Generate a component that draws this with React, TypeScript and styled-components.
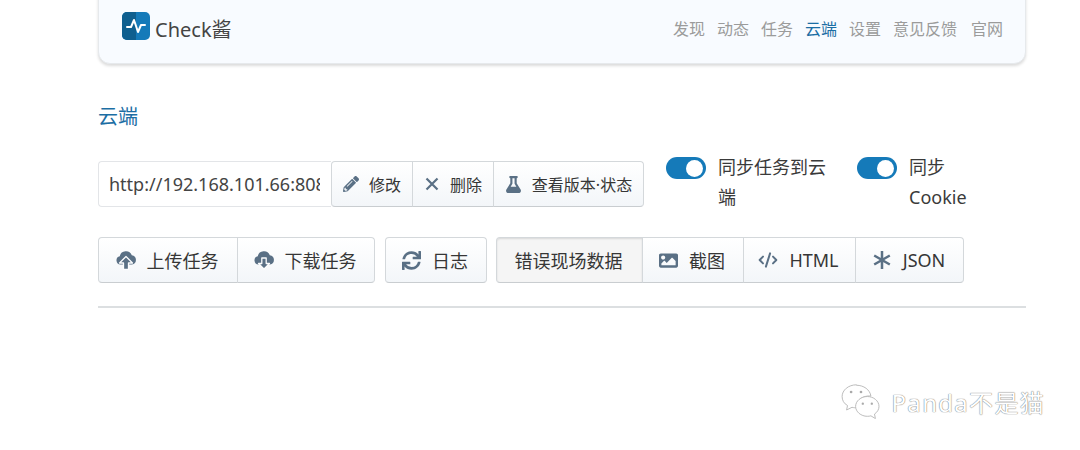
import * as React from 'react';
import styled, { createGlobalStyle } from 'styled-components';
import { FaPencilAlt, FaFlask, FaSync, FaImage } from 'react-icons/fa';
import { CodeXml } from 'lucide-react';

const GlobalStyle = createGlobalStyle`
  html, body {
    margin: 0;
    background: #fff;
    overflow: hidden;
  }
  body {
    font-family: "Noto Sans", "Noto Sans CJK SC", sans-serif;
    color: #363636;
  }
`;

const Page = styled.div`
  position: relative;
  width: 1080px;
  height: 450px;
  box-sizing: border-box;
  padding: 0 54px 0 98px;
  overflow: hidden;
`;

const Header = styled.header`
  display: flex;
  align-items: center;
  justify-content: space-between;
  box-sizing: border-box;
  height: 85px;
  margin-top: -21px;
  padding: 13px 24px 0 23px;
  background: #f8fbff;
  border: 1px solid #e6e9ec;
  border-radius: 12px;
  box-shadow: 0 2px 3px rgba(0, 0, 0, 0.14);
`;

const Brand = styled.div`
  display: flex;
  align-items: center;
  gap: 5px;
  font-size: 20px;
  color: #444;
  svg {
    margin-top: -5px;
  }
`;

const Nav = styled.nav`
  display: flex;
  gap: 12px;
`;

const NavItem = styled.span<{ $active?: boolean }>`
  font-size: 16px;
  color: ${(p) => (p.$active ? '#1c6ea4' : '#9b9b9b')};
  &:last-child {
    margin: 0 -2px 0 2px;
  }
`;

const Title = styled.h2`
  margin: 38px 0 0;
  height: 30px;
  font-size: 20px;
  line-height: 30px;
  font-weight: 400;
  color: #1c6ea4;
`;

const TopRow = styled.div`
  display: flex;
  align-items: flex-start;
  margin-top: 29px;
  height: 76px;
`;

const Group = styled.div<{ $shift?: boolean }>`
  display: flex;
  margin-left: ${(p) => (p.$shift ? -1 : 0)}px;
`;

const UrlInput = styled.input`
  box-sizing: border-box;
  width: 233px;
  height: 46px;
  padding: 0 11px 0 10px;
  border: 1px solid #e3e5e8;
  border-right: 0;
  border-radius: 4px 0 0 4px;
  outline: none;
  background: #fff;
  font: 18px "Noto Sans", sans-serif;
  color: #444;
`;

const Btn = styled.button<{ $small?: boolean; $on?: boolean; $w: number }>`
  display: flex;
  align-items: center;
  justify-content: center;
  gap: ${(p) => (p.$small ? 10 : 11)}px;
  box-sizing: border-box;
  width: ${(p) => p.$w}px;
  height: 46px;
  padding: 0 ${(p) => (p.$small ? 0 : 2)}px 0 0;
  border: 1px solid #d4d8db;
  border-bottom-color: #c9cdd0;
  margin-left: -1px;
  background: ${(p) => (p.$on ? '#f5f5f5' : 'linear-gradient(#fff, #f3f6f9)')};
  box-shadow: ${(p) => (p.$on ? 'inset 0 1px 2px rgba(0,0,0,.12)' : 'none')};
  font-family: "Noto Sans", "Noto Sans CJK SC", sans-serif;
  font-size: ${(p) => (p.$small ? 16 : 18)}px;
  color: #363636;
  &:first-child {
    margin-left: 0;
    border-radius: 4px 0 0 4px;
  }
  &:last-child {
    border-radius: 0 4px 4px 0;
  }
  &:only-child {
    border-radius: 4px;
  }
  svg {
    color: #5a7085;
    flex: none;
  }
`;

const Toggles = styled.div`
  display: flex;
  margin-left: 22px;
  margin-top: -4px;
`;

const ToggleItem = styled.div<{ $w: number; $labelW: number }>`
  display: flex;
  align-items: flex-start;
  gap: 12px;
  width: ${(p) => p.$w}px;
  font-size: 18px;
  line-height: 30px;
  color: #3a3a3a;
  span {
    display: block;
    width: ${(p) => p.$labelW}px;
    margin-top: -5px;
  }
`;

const Switch = styled.i`
  display: flex;
  flex: none;
  justify-content: flex-end;
  align-items: center;
  box-sizing: border-box;
  width: 40px;
  height: 22px;
  padding-right: 3px;
  border-radius: 11px;
  background: #157ab9;
  &::after {
    content: '';
    width: 17px;
    height: 17px;
    border-radius: 50%;
    background: #fff;
  }
`;

const BottomRow = styled.div`
  display: flex;
  gap: 10px;
`;

const Divider = styled.hr`
  height: 2px;
  margin: 23px 0 0;
  border: 0;
  background: #dcdfe1;
`;

const Watermark = styled.div`
  position: absolute;
  right: 35px;
  top: 383px;
  display: flex;
  align-items: center;
  gap: 11px;
  font-size: 24px;
  letter-spacing: 1.3px;
  color: #fff;
  text-shadow: 0 0 1px #707070, 0 0 1px #8a8a8a;
`;

const Logo = () => (
  <svg width="28" height="28" viewBox="0 0 28 28">
    <rect width="28" height="28" rx="5" fill="#157ab9" />
    <path d="M5 0h9v28H5a5 5 0 0 1-5-5V5a5 5 0 0 1 5-5z" fill="#0f5f8f" />
    <path d="M5 15h4l3-7 4 12 3-7h4" fill="none" stroke="#fff" strokeWidth="2" strokeLinejoin="round" strokeLinecap="round" />
  </svg>
);

const Cross = () => (
  <svg width="16" height="16" viewBox="0 0 16 16">
    <path d="M2.500 2.500l11 11M13.500 2.500l-11 11" stroke="currentColor" strokeWidth="2.200" strokeLinecap="butt" />
  </svg>
);

const Star = () => (
  <svg width="20" height="20" viewBox="0 0 20 20">
    <path d="M10 1v18M2.200 5.500l15.600 9M17.800 5.500l-15.600 9" stroke="currentColor" strokeWidth="2.500" />
  </svg>
);

const cloud = 'M4.500 14.500a4.200 4.200 0 0 1-.7-8.300 6.300 6.300 0 0 1 12-1 4.700 4.700 0 0 1 .2 9.300z';

const CloudUp = () => (
  <svg width="20" height="20" viewBox="0 0 20 20">
    <path d={cloud} fill="currentColor" />
    <path d="M10 6.500l-6.500 6.500h4v6.500h5V13h4z" fill="currentColor" stroke="#fbfcfd" strokeWidth="1.300" strokeLinejoin="round" />
  </svg>
);

const CloudDown = () => (
  <svg width="20" height="20" viewBox="0 0 20 20">
    <path d={cloud} fill="currentColor" />
    <path d="M10 19l-5.500-5.500h3.300V8h4.400v5.500h3.300z" fill="currentColor" stroke="#fbfcfd" strokeWidth="1.300" strokeLinejoin="round" />
  </svg>
);

const WeChat = () => (
  <svg width="40" height="36" viewBox="0 0 44 40" fill="#fff" stroke="#b5b5b5" strokeWidth="1">
    <path d="M17 2C8 2 1 8 1 15c0 4 2 8 6 10l-1 5 6-3c2 .5 4 .6 5 .5-1-8 7-14 16-13-1-7-8-12-16-12z" />
    <path d="M29 15c-7 0-13 5-13 11s6 11 13 11c1.500 0 3-.2 4-.5l5 3-1-5c3-2 5-5 5-8.500 0-6-6-11-13-11z" />
    <circle cx="11" cy="10" r="1.500" fill="#aaa" stroke="none" />
    <circle cx="22" cy="10" r="1.500" fill="#aaa" stroke="none" />
    <circle cx="24" cy="23" r="1.300" fill="#aaa" stroke="none" />
    <circle cx="34" cy="23" r="1.300" fill="#aaa" stroke="none" />
  </svg>
);

const navItems = ['发现', '动态', '任务', '云端', '设置', '意见反馈', '官网'];

export default function App() {
  return (
    <Page>
      <GlobalStyle />
      <Header>
        <Brand>
          <Logo />
          Check酱
        </Brand>
        <Nav>
          {navItems.map((item) => (
            <NavItem key={item} $active={item === '云端'}>{item}</NavItem>
          ))}
        </Nav>
      </Header>

      <Title>云端</Title>

      <TopRow>
        <UrlInput readOnly value="http://192.168.101.66:8080" />
        <Group>
          <Btn $small $w={82}><FaPencilAlt size={16} />修改</Btn>
          <Btn $small $w={82}><Cross />删除</Btn>
          <Btn $small $w={151}><FaFlask size={17} />查看版本·状态</Btn>
        </Group>
        <Toggles>
          <ToggleItem $w={191} $labelW={118}>
            <Switch />
            <span>同步任务到云端</span>
          </ToggleItem>
          <ToggleItem $w={110} $labelW={58}>
            <Switch />
            <span>同步 Cookie</span>
          </ToggleItem>
        </Toggles>
      </TopRow>

      <BottomRow>
        <Group>
          <Btn $w={140}><CloudUp />上传任务</Btn>
          <Btn $w={138}><CloudDown />下载任务</Btn>
        </Group>
        <Group>
          <Btn $w={102}><FaSync size={19} />日志</Btn>
        </Group>
        <Group $shift>
          <Btn $on $w={147}>错误现场数据</Btn>
          <Btn $w={102}><FaImage size={19} />截图</Btn>
          <Btn $w={113}><CodeXml size={20} strokeWidth={2.4} />HTML</Btn>
          <Btn $w={109}><Star />JSON</Btn>
        </Group>
      </BottomRow>

      <Divider />

      <Watermark>
        <WeChat />
        Panda不是猫
      </Watermark>
    </Page>
  );
}
